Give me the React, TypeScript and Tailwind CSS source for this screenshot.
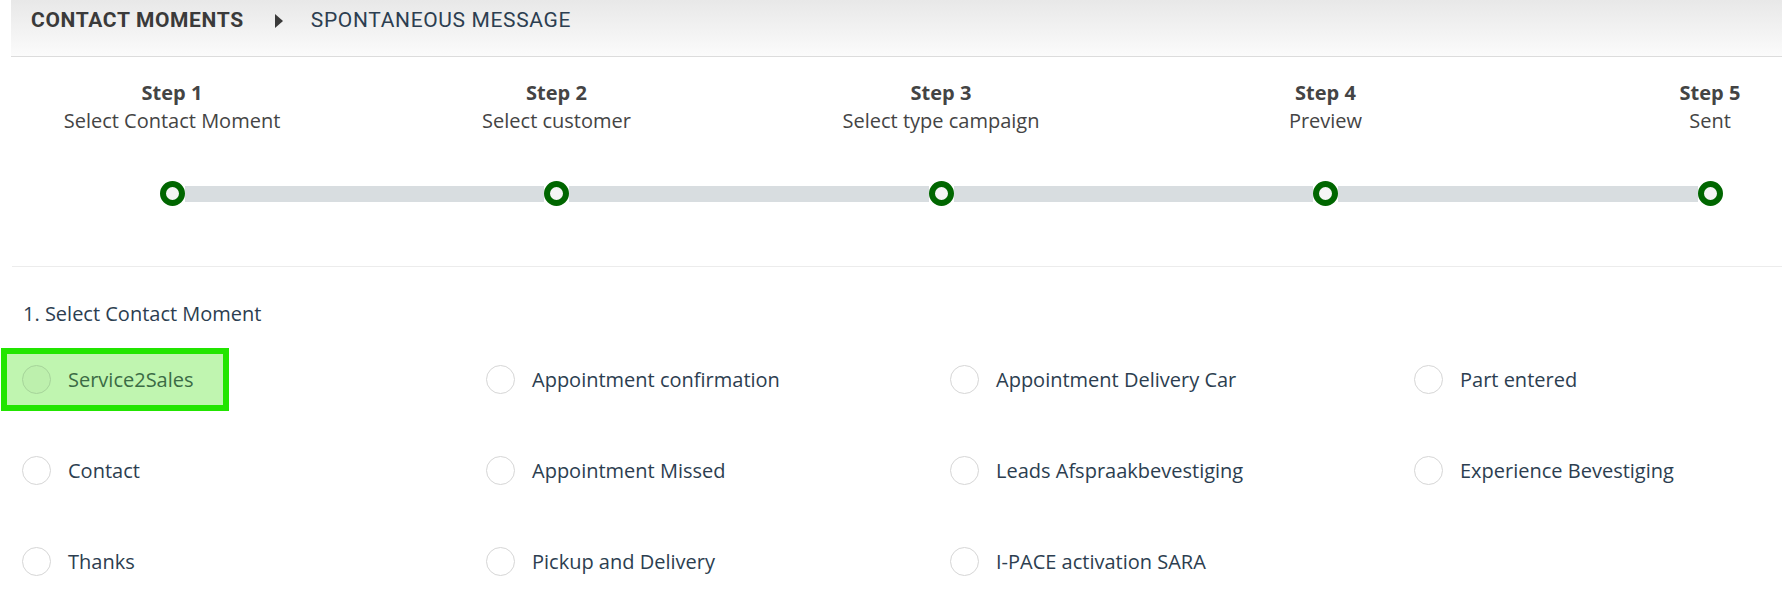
import React from "react"

const steps = [
  { title: "Step 1", label: "Select Contact Moment" },
  { title: "Step 2", label: "Select customer" },
  { title: "Step 3", label: "Select type campaign" },
  { title: "Step 4", label: "Preview" },
  { title: "Step 5", label: "Sent" },
]

const moments = [
  "Service2Sales",
  "Appointment confirmation",
  "Appointment Delivery Car",
  "Part entered",
  "Contact",
  "Appointment Missed",
  "Leads Afspraakbevestiging",
  "Experience Bevestiging",
  "Thanks",
  "Pickup and Delivery",
  "I-PACE activation SARA",
]

function Dot() {
  return <div className="h-[25px] w-[25px] shrink-0 rounded-full border-[6px] border-[#006600] bg-[#f5f5f5]" />
}

export default function App() {
  const selected = "Service2Sales"

  return (
    <div className="min-h-screen w-full overflow-hidden bg-white font-['Open_Sans',sans-serif]">
      {/* breadcrumb */}
      <div className="ml-[11px] flex h-[57px] items-start border-b border-[#dcdcdc] bg-gradient-to-b from-[#e8e8e8] to-[#fbfbfb] pl-[20px] pt-[8px]">
        <div className="flex items-center font-['Roboto',sans-serif] text-[21px] leading-[25px] tracking-[0.65px]">
          <span className="font-bold text-[#3a3a3a]">CONTACT MOMENTS</span>
          <svg viewBox="0 0 8 14" className="ml-[31px] h-[14px] w-[8px]">
            <path d="M0 0 L8 7 L0 14 Z" fill="#3a3a3a" />
          </svg>
          <span className="ml-[28px] text-[#2c3e50]">SPONTANEOUS MESSAGE</span>
        </div>
      </div>

      {/* stepper */}
      <div className="ml-[12px] border-b border-[#ececec] pb-[60px] pt-[22px]">
        <div className="flex w-[2000px] gap-[144.5px] pl-[40px]">
          {steps.map((s) => (
            <div key={s.title} className="flex w-[240px] shrink-0 flex-col items-center text-[20px] leading-[28px] text-[#444]">
              <span className="font-bold">{s.title}</span>
              <span>{s.label}</span>
            </div>
          ))}
        </div>
        <div className="ml-[147.5px] mt-[46px] flex w-[1563px] items-center">
          {steps.map((s, i) => (
            <React.Fragment key={s.title}>
              <Dot />
              {i < steps.length - 1 && <div className="h-[16px] flex-1 bg-[#d8dde0]" />}
            </React.Fragment>
          ))}
        </div>
      </div>

      {/* moments */}
      <div className="pt-[33px]">
        <div className="pl-[23px] text-[20px] leading-[28px] text-[#2c3e50]">1. Select Contact Moment</div>
        <div className="mt-[20px] grid grid-cols-[repeat(4,464px)] gap-y-[28px] pl-[1px]">
          {moments.map((m) => {
            const on = m === selected
            return (
              <label
                key={m}
                className={`flex h-[63px] w-fit items-center border-[6px] pl-[15px] pr-[29px] ${
                  on ? "border-[#22e500] bg-[#c0f5b0]" : "border-transparent"
                }`}
              >
                <span
                  className={`h-[29px] w-[29px] shrink-0 rounded-full border ${
                    on ? "border-[#a6d49a] bg-[#bdf0ad]" : "border-[#d6d6d6] bg-white"
                  }`}
                />
                <span className={`ml-[17px] whitespace-nowrap text-[20px] ${on ? "text-[#3b6b45]" : "text-[#2c3e50]"}`}>
                  {m}
                </span>
              </label>
            )
          })}
        </div>
      </div>
    </div>
  )
}
